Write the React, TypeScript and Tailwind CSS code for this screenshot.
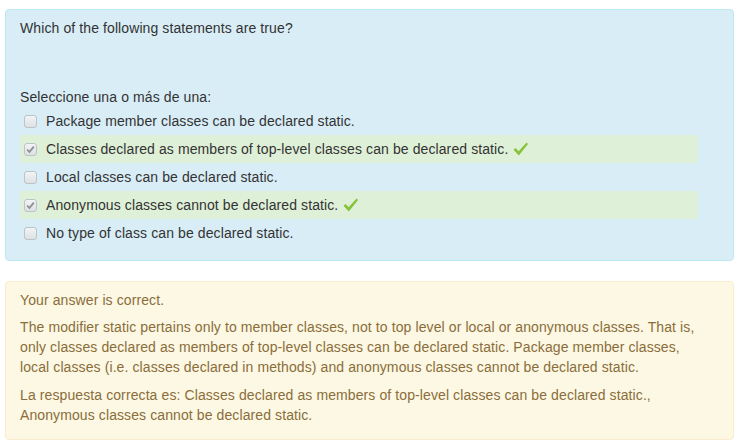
const options = [
  { text: 'Package member classes can be declared static.', checked: false },
  { text: 'Classes declared as members of top-level classes can be declared static.', checked: true },
  { text: 'Local classes can be declared static.', checked: false },
  { text: 'Anonymous classes cannot be declared static.', checked: true },
  { text: 'No type of class can be declared static.', checked: false },
];

function Box({ checked }: { checked: boolean }) {
  return (
    <span className="w-[13px] h-[13px] rounded-[3px] border border-[#bcc3c9] bg-gradient-to-b from-[#f2f4f5] to-[#dde1e4] flex items-center justify-center shrink-0">
      {checked && (
        <svg width="9" height="9" viewBox="0 0 9 9">
          <path d="M1.2 4.6 L3.5 7 L7.8 1.6" fill="none" stroke="#8a8f94" strokeWidth="1.8" />
        </svg>
      )}
    </span>
  );
}

function Tick() {
  return (
    <svg width="17" height="16" viewBox="0 0 17 16" className="ml-[4px]">
      <path d="M1.5 8.8 L3.6 6.9 L6.6 10.2 L14.6 1.6 L16 3 L6.8 14.6 Z" fill="#86c23a" />
    </svg>
  );
}

export default function App() {
  return (
    <div className="w-[750px] h-[444px] bg-white pt-[9px] px-[5px] font-['Liberation_Sans',Arial,sans-serif] text-[14px] leading-[20px] tracking-[0.1px]">
      <div className="w-[729px] bg-[#d9edf7] border border-[#bce8f1] rounded-[4px] pt-[8px] pb-[13px] px-[14px] text-[#333]">
        <p>Which of the following statements are true?</p>
        <p className="mt-[49px]">Seleccione una o más de una:</p>
        <div className="flex flex-col w-[678px]">
          {options.map((o) => (
            <div
              key={o.text}
              className={`h-[28px] flex items-center pl-[4px] ${o.checked ? 'bg-[#dff0d8]' : ''}`}
            >
              <Box checked={o.checked} />
              <span className="ml-[9px]">{o.text}</span>
              {o.checked && <Tick />}
            </div>
          ))}
        </div>
      </div>
      <div className="w-[729px] mt-[20px] bg-[#fcf8e3] border border-[#faebcc] rounded-[4px] pt-[8px] pb-[14px] px-[14px] text-[#8a6d3b]">
        <p>Your answer is correct.</p>
        <div className="max-w-[683px]">
          <p className="mt-[7px]">
            The modifier static pertains only to member classes, not to top level or local or anonymous classes. That is,
            only classes declared as members of top-level classes can be declared static. Package member classes,
            local classes (i.e. classes declared in methods) and anonymous classes cannot be declared static.
          </p>
          <p className="mt-[8px]">
            La respuesta correcta es: Classes declared as members of top-level classes can be declared static.,
            Anonymous classes cannot be declared static.
          </p>
        </div>
      </div>
    </div>
  );
}
